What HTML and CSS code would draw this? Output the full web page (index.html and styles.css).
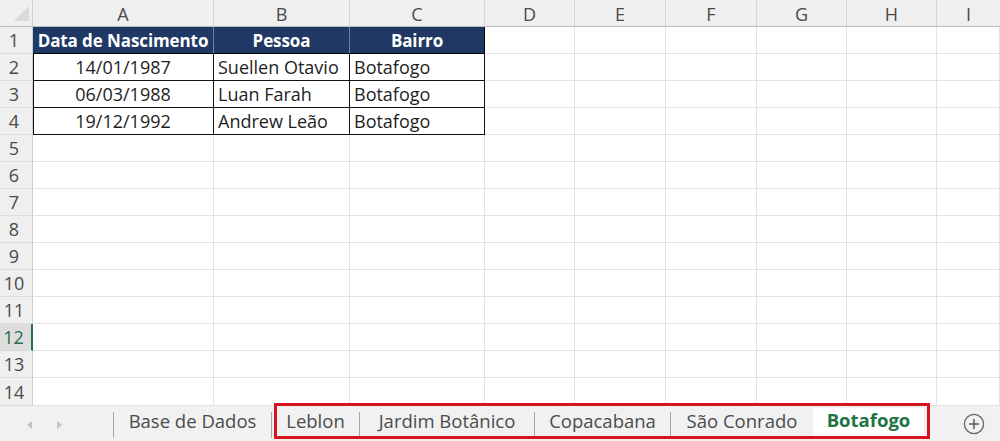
FILE: index.html
```html
<!DOCTYPE html>
<html lang="pt">
<head>
<meta charset="utf-8">
<link rel="stylesheet" href="styles.css">
</head>
<body>
<div class="sheet">
  <div class="grid">
    <div class="corner"><span class="tri"></span></div>
    <div class="ch">A</div><div class="ch">B</div><div class="ch">C</div><div class="ch">D</div><div class="ch">E</div><div class="ch">F</div><div class="ch">G</div><div class="ch">H</div><div class="ch last">I</div>

    <div class="rh">1</div>
    <div class="c th">Data de Nascimento</div><div class="c th">Pessoa</div><div class="c th thl">Bairro</div>
    <div class="c"></div><div class="c"></div><div class="c"></div><div class="c"></div><div class="c"></div><div class="c"></div>

    <div class="rh">2</div>
    <div class="c td ctr first">14/01/1987</div><div class="c td">Suellen Otavio</div><div class="c td">Botafogo</div>
    <div class="c"></div><div class="c"></div><div class="c"></div><div class="c"></div><div class="c"></div><div class="c"></div>

    <div class="rh">3</div>
    <div class="c td ctr first">06/03/1988</div><div class="c td">Luan Farah</div><div class="c td">Botafogo</div>
    <div class="c"></div><div class="c"></div><div class="c"></div><div class="c"></div><div class="c"></div><div class="c"></div>

    <div class="rh">4</div>
    <div class="c td ctr first">19/12/1992</div><div class="c td">Andrew Leão</div><div class="c td">Botafogo</div>
    <div class="c"></div><div class="c"></div><div class="c"></div><div class="c"></div><div class="c"></div><div class="c"></div>

    <div class="rh">5</div><div class="c"></div><div class="c"></div><div class="c"></div><div class="c"></div><div class="c"></div><div class="c"></div><div class="c"></div><div class="c"></div><div class="c"></div>
    <div class="rh">6</div><div class="c"></div><div class="c"></div><div class="c"></div><div class="c"></div><div class="c"></div><div class="c"></div><div class="c"></div><div class="c"></div><div class="c"></div>
    <div class="rh">7</div><div class="c"></div><div class="c"></div><div class="c"></div><div class="c"></div><div class="c"></div><div class="c"></div><div class="c"></div><div class="c"></div><div class="c"></div>
    <div class="rh">8</div><div class="c"></div><div class="c"></div><div class="c"></div><div class="c"></div><div class="c"></div><div class="c"></div><div class="c"></div><div class="c"></div><div class="c"></div>
    <div class="rh">9</div><div class="c"></div><div class="c"></div><div class="c"></div><div class="c"></div><div class="c"></div><div class="c"></div><div class="c"></div><div class="c"></div><div class="c"></div>
    <div class="rh">10</div><div class="c"></div><div class="c"></div><div class="c"></div><div class="c"></div><div class="c"></div><div class="c"></div><div class="c"></div><div class="c"></div><div class="c"></div>
    <div class="rh">11</div><div class="c"></div><div class="c"></div><div class="c"></div><div class="c"></div><div class="c"></div><div class="c"></div><div class="c"></div><div class="c"></div><div class="c"></div>
    <div class="rh sel">12</div><div class="c"></div><div class="c"></div><div class="c"></div><div class="c"></div><div class="c"></div><div class="c"></div><div class="c"></div><div class="c"></div><div class="c"></div>
    <div class="rh">13</div><div class="c"></div><div class="c"></div><div class="c"></div><div class="c"></div><div class="c"></div><div class="c"></div><div class="c"></div><div class="c"></div><div class="c"></div>
    <div class="rh">14</div><div class="c"></div><div class="c"></div><div class="c"></div><div class="c"></div><div class="c"></div><div class="c"></div><div class="c"></div><div class="c"></div><div class="c"></div>
  </div>

  <div class="tabbar">
    <div class="nav">
      <span class="arrow left"></span>
      <span class="arrow right"></span>
    </div>
    <div class="tab w-base">Base de Dados</div>
    <div class="tab w-leblon">Leblon</div>
    <div class="tab w-jardim">Jardim Botânico</div>
    <div class="tab w-copa">Copacabana</div>
    <div class="tab w-sao">São Conrado</div>
    <div class="tab active w-bota">Botafogo</div>
    <div class="spacer"></div>
    <div class="add">
      <svg width="22" height="22" viewBox="0 0 22 22"><circle cx="11" cy="11" r="9.6" fill="none" stroke="#6a6a6a" stroke-width="1.4"/><path d="M11 6v10M6 11h10" stroke="#5a5a5a" stroke-width="1.5"/></svg>
    </div>
    <div class="highlight"></div>
  </div>
</div>
</body>
</html>
```

FILE: styles.css
```css
* { box-sizing: border-box; }
html, body { margin: 0; padding: 0; }
body {
  width: 1000px;
  height: 441px;
  overflow: hidden;
  background: #fff;
  font-family: "Open Sans", "Noto Sans", sans-serif;
  color: #222;
}
.sheet { display: flex; flex-direction: column; width: 1000px; height: 441px; }
.grid {
  display: grid;
  grid-template-columns: 33px 181px 136px 135px 90px 91px 91px 90px 90px 63px;
  grid-template-rows: 27px repeat(13, 27px) 28px;
  height: 406px;
}
.corner {
  background: #efefef;
  border-right: 1px solid #cfcfcf;
  border-bottom: 1px solid #bdbdbd;
  position: relative;
}
.tri {
  position: absolute;
  left: 14px; top: 6px;
  width: 0; height: 0;
  border-left: 15px solid transparent;
  border-bottom: 15px solid #dadada;
}
.ch {
  background: #efefef;
  border-right: 1px solid #d6d6d6;
  border-bottom: 1px solid #bdbdbd;
  font-size: 18px;
  color: #4a4a4a;
  display: flex; align-items: center; justify-content: center;
  padding-top: 1px;
}
.ch.last { border-right: none; }
.rh {
  background: #efefef;
  border-right: 1px solid #cfcfcf;
  border-bottom: 1px solid #dcdcdc;
  font-size: 18px;
  color: #4a4a4a;
  display: flex; align-items: center; justify-content: center;
  padding-right: 4px;
}
.rh.sel {
  background: #dedede;
  color: #2c6b4a;
  border-right: 2px solid #217346;
}
.c {
  border-right: 1px solid #e2e2e2;
  border-bottom: 1px solid #e2e2e2;
  font-size: 18px;
  display: flex; align-items: center;
  white-space: nowrap;
  overflow: hidden;
}
.th {
  background: #1f3864;
  color: #fff;
  font-weight: 700;
  justify-content: center;
  font-size: 17px;
  letter-spacing: -0.1px;
  border-right: 1px solid #6f7fa0;
  border-bottom: 1px solid #000;
}
.th.thl { border-right: 1px solid #000; }
.td {
  color: #1e1e1e;
  border-right: 1px solid #111;
  border-bottom: 1px solid #111;
  padding-left: 4px;
}
.td.ctr { justify-content: center; padding-left: 0; }
.td.first { box-shadow: inset 1px 0 0 #111; }

.tabbar {
  position: relative;
  flex: 1;
  display: flex;
  align-items: stretch;
  background: #f1f1f1;
  font-size: 18.5px;
  color: #4b4b4b;
}
.nav {
  width: 113px;
  display: flex; align-items: center;
  padding-left: 27px;
  gap: 25px;
  padding-top: 1px;
}
.arrow { width: 0; height: 0; border-top: 4px solid transparent; border-bottom: 4px solid transparent; }
.arrow.left { border-right: 5px solid #c4c4c4; }
.arrow.right { border-left: 5px solid #c4c4c4; }
.tab {
  display: flex; align-items: center; justify-content: center;
  border-left: 1px solid #a8a8a8;
  margin: 6px 0 5px;
  padding-bottom: 7px;
  line-height: 1;
  white-space: nowrap;
}
.w-base { width: 158px; }
.w-leblon { width: 88px; }
.w-jardim { width: 175px; }
.w-copa { width: 136px; }
.w-sao { width: 143px; }
.w-bota { width: 111px; }
.tab.active {
  background: #fff;
  color: #217346;
  font-weight: 700;
  font-size: 18.5px;
  margin: 2px 0 5px;
  border-left: none;
  border-bottom: 2px solid #217346;
  padding-bottom: 3px;
}
.spacer { flex: 1; }
.add {
  width: 56px;
  display: flex; align-items: center; justify-content: center;
  padding-left: 4px;
}
.highlight {
  position: absolute;
  left: 274px; top: -3px;
  width: 656px; height: 36px;
  border: 3px solid #d5161e;
  pointer-events: none;
}
```
